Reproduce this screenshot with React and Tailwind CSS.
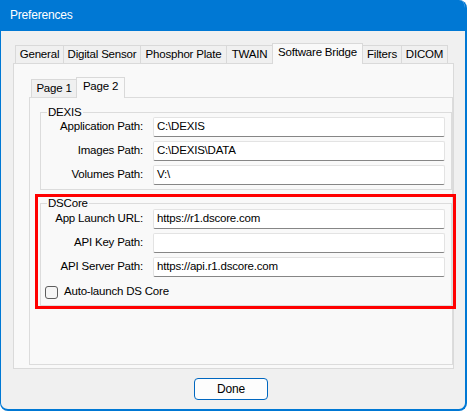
import React from "react";

const outerTabs = [
  { label: "General", w: "w-[49px]" },
  { label: "Digital Sensor", w: "w-[78px]" },
  { label: "Phosphor Plate", w: "w-[87px]" },
  { label: "TWAIN", w: "w-[47px]" },
  { label: "Software Bridge", w: "w-[91px]", active: true },
  { label: "Filters", w: "w-[40px]" },
  { label: "DICOM", w: "w-[47px]" },
];

function Tab({ label, w, active, first }) {
  return (
    <div
      className={`${w} ${first ? "" : "-ml-px"} flex items-center justify-center border-t border-l border-r border-[#d9d9d9] whitespace-nowrap ${
        active
          ? "h-[21px] -mb-px bg-[#f9f9f9] relative z-10 pb-[2px]"
          : "h-[18px] bg-[#f0f0f0]"
      }`}
    >
      {label}
    </div>
  );
}

function Field({ label, value }) {
  return (
    <div className="flex items-center h-[20px]">
      <div className="w-[102px] text-right whitespace-nowrap">{label}</div>
      <div className="ml-[10px] w-[292px] h-[20px] bg-white border border-[#e3e3e3] border-b-[#868686] rounded-[2px] flex items-center pl-[3px] whitespace-nowrap">
        {value}
      </div>
    </div>
  );
}

function Group({ title, children, className = "" }) {
  return (
    <div
      className={`relative ml-[10px] w-[412px] border border-[#dcdcdc] ${className}`}
    >
      <span className="absolute -top-[8px] left-[6px] bg-[#f9f9f9] px-[1px] leading-[14px]">
        {title}
      </span>
      {children}
    </div>
  );
}

export default function App() {
  return (
    <div
      className="w-[467px] h-[411px] bg-[#f0f0f0] border-l border-r-2 border-b-2 border-[#0078d4] rounded-tr-[8px] rounded-b-[8px] overflow-hidden text-[11.5px] tracking-[-0.2px] text-black"
      style={{ fontFamily: '"Liberation Sans", Arial, sans-serif' }}
    >
      <div className="h-[31px] bg-[#0078d4] text-white text-[12px] flex items-center pl-[9px] pb-[1px]">
        Preferences
      </div>

      <div className="pl-[12px] pt-[12px]">
        <div className="flex items-end pl-[2px] h-[20px]">
          {outerTabs.map((t, i) => (
            <Tab key={t.label} {...t} first={i === 0} />
          ))}
        </div>

        <div className="w-[441px] h-[306px] border border-[#dadada] bg-[#f9f9f9] pl-[15px] pt-[13px]">
          <div className="flex items-end pl-[2px] h-[20px]">
            <Tab label="Page 1" w="w-[46px]" first />
            <Tab label="Page 2" w="w-[49px]" active />
          </div>

          <div className="w-[424px] h-[268px] border border-[#dcdcdc] bg-[#f9f9f9]">
            <Group title="DEXIS" className="mt-[14px] h-[78px] pt-[4px]">
              <div className="flex flex-col gap-[4px]">
                <Field label="Application Path:" value="C:\DEXIS" />
                <Field label="Images Path:" value="C:\DEXIS\DATA" />
                <Field label="Volumes Path:" value="V:\" />
              </div>
            </Group>

            <Group title="DSCore" className="mt-[13px] h-[103px] pt-[5px]">
              <div className="flex flex-col gap-[4px]">
                <Field label="App Launch URL:" value="https://r1.dscore.com" />
                <Field label="API Key Path:" value="" />
                <Field
                  label="API Server Path:"
                  value="https://api.r1.dscore.com"
                />
              </div>
              <label className="flex items-center mt-[9px] ml-[4px] h-[12px]">
                <span className="w-[13px] h-[13px] border border-[#5d5d5d] rounded-[3px] bg-[#f5f5f5]" />
                <span className="ml-[6px] whitespace-nowrap">Auto-launch DS Core</span>
              </label>
              <div className="absolute -left-[6px] -top-[10px] w-[421px] h-[115px] border-[3px] border-[#ff0000] pointer-events-none" />
            </Group>
          </div>
        </div>

        <div className="mt-[9px] ml-[181px]">
          <button className="w-[74px] h-[22px] bg-[#fdfdfd] border border-[#0067c0] rounded-[4px] flex items-center justify-center text-[12px]">
            Done
          </button>
        </div>
      </div>
    </div>
  );
}
